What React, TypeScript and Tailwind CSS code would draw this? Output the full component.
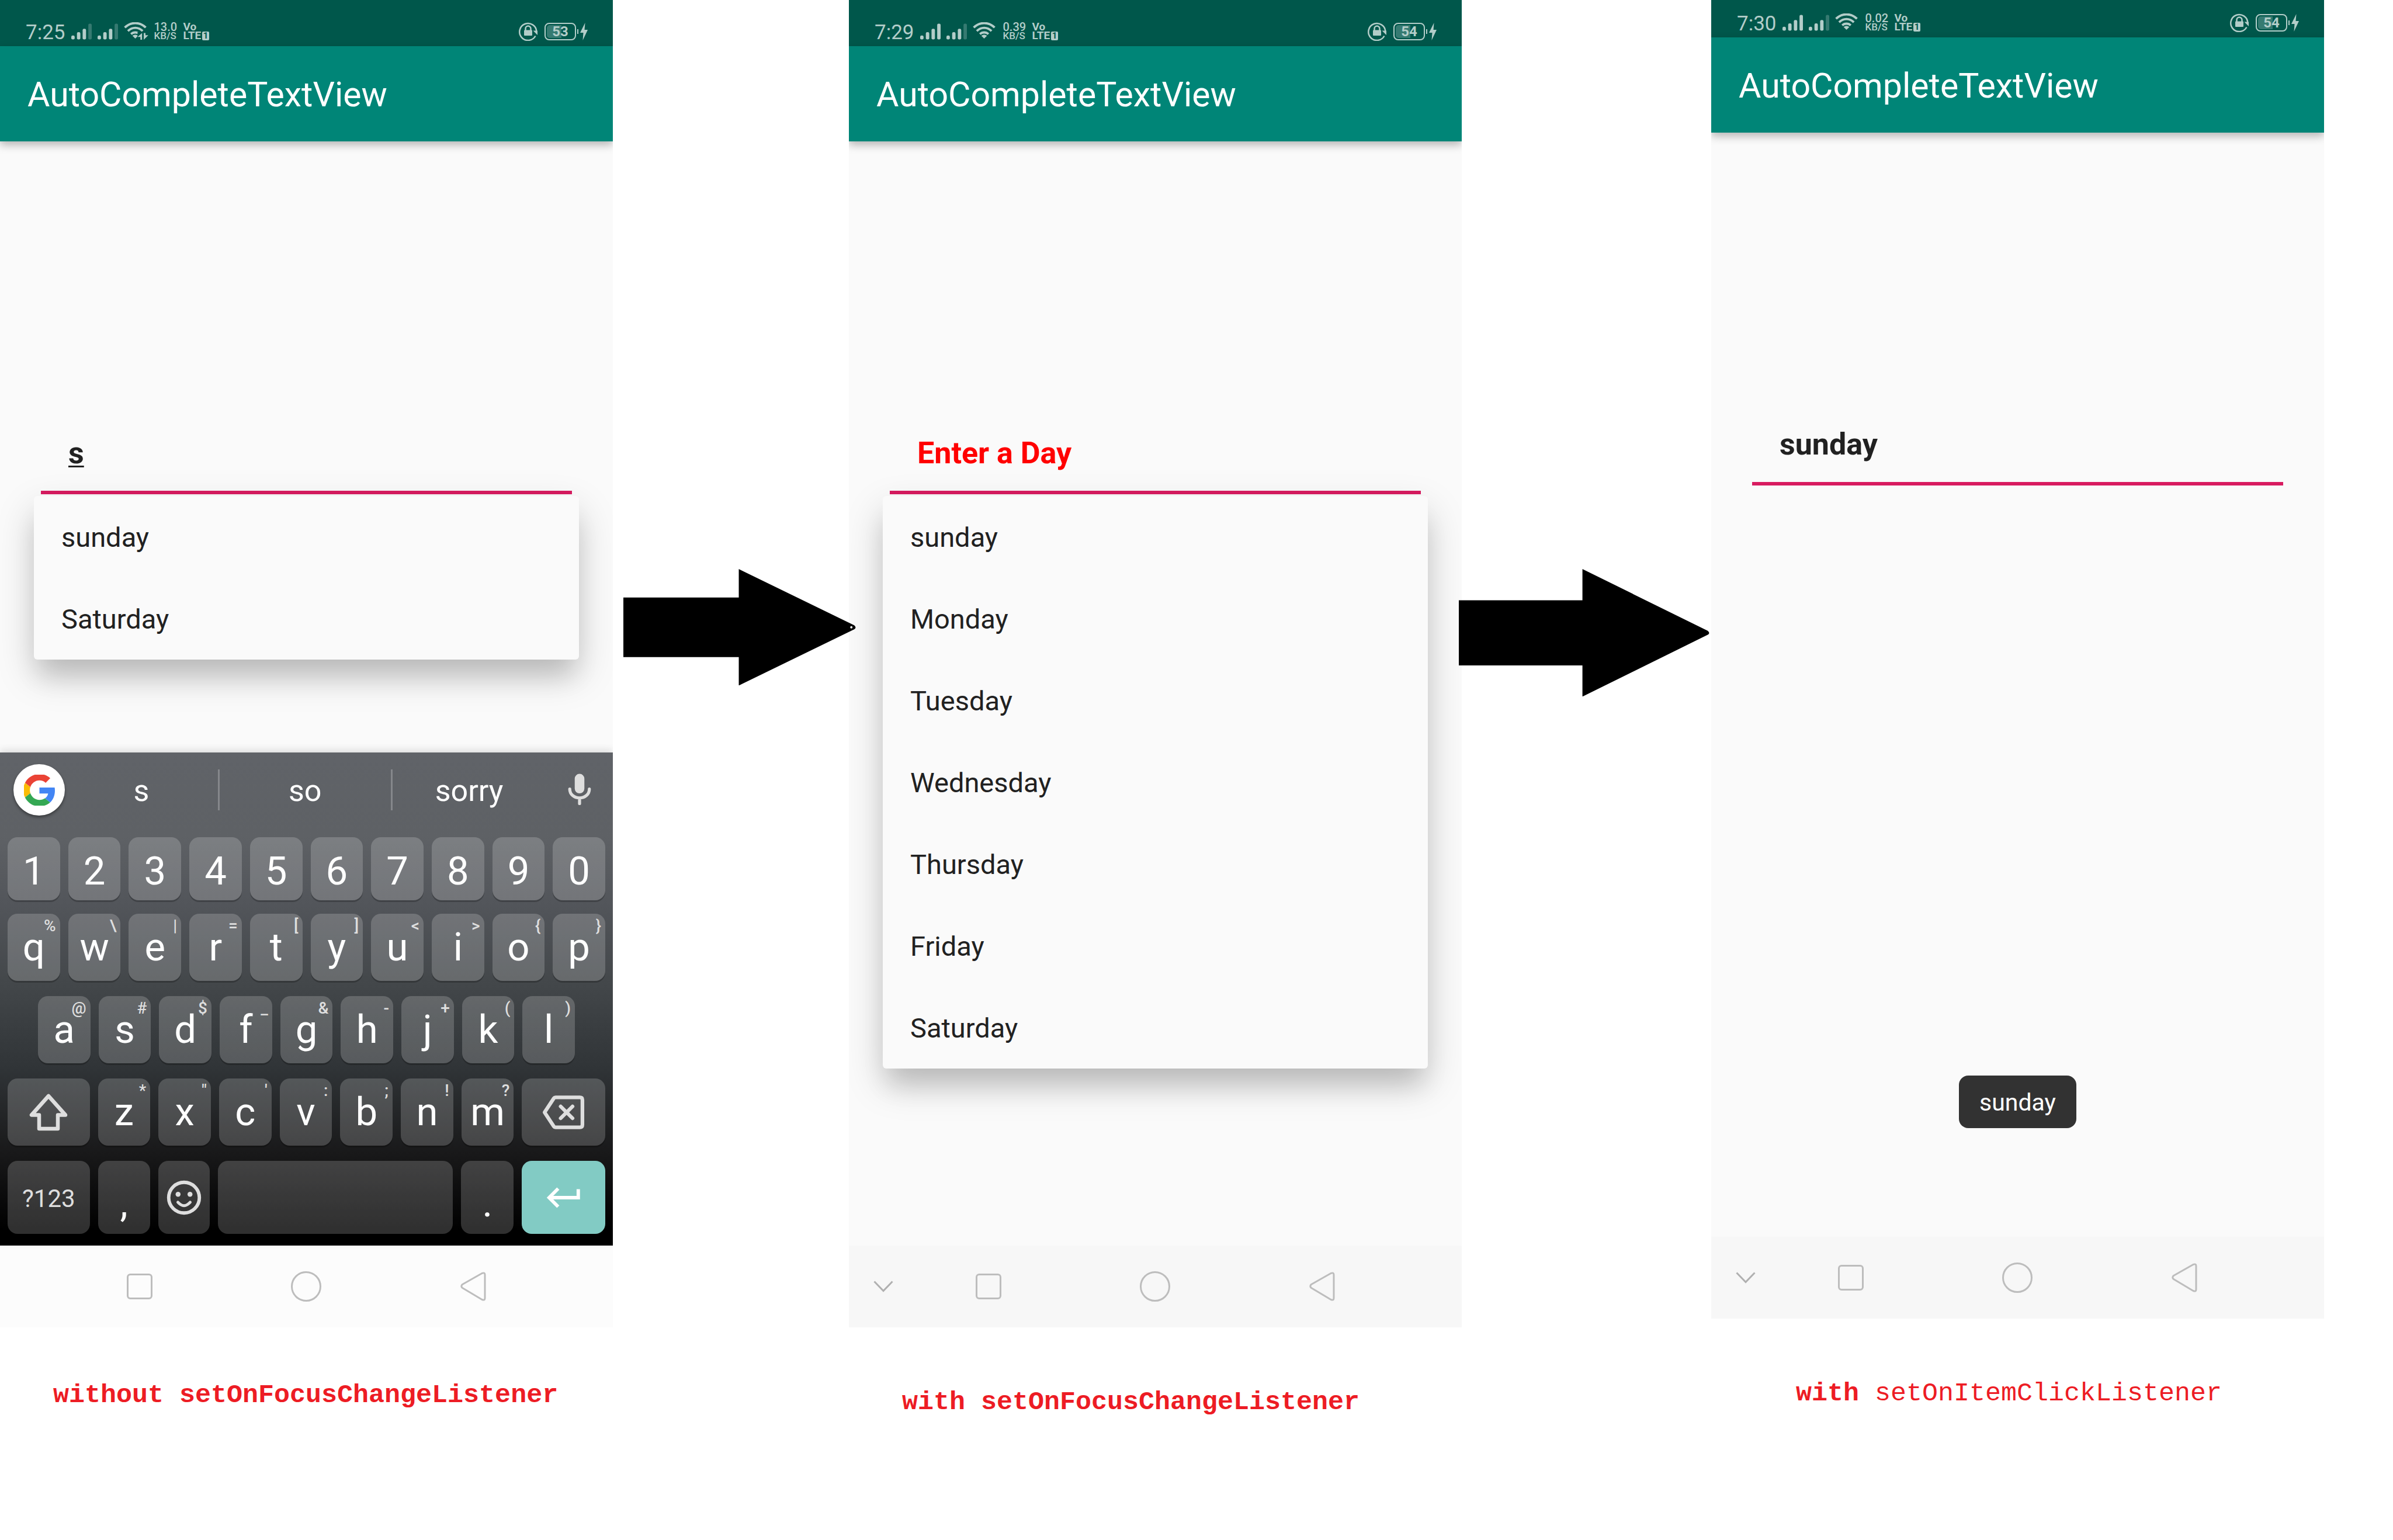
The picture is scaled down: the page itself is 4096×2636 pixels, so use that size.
import React from "react";

type Status = {
  time: string;
  firstSim: number;
  rate: string;
  battery: string;
  syncing?: boolean;
};

/* ---------- status bar ---------- */

function Signal({ level }: { level: number }) {
  const tops = [21, 15, 9, 0];
  return (
    <svg className="h-[28px] w-[35px] shrink-0" viewBox="0 0 36 28" fill="currentColor" aria-hidden="true">
      {tops.map((top, i) => (
        <rect key={i} x={i * 10} y={top} width="6" height={28 - top} rx="2.500" opacity={i < level ? 1 : 0.3} />
      ))}
    </svg>
  );
}

function Wifi({ syncing }: { syncing?: boolean }) {
  return (
    <svg className="h-[31px] w-[42px] shrink-0" viewBox="0 0 43 32" fill="none" stroke="currentColor" aria-hidden="true">
      <path d="M1.500 9.500C12 -1 28 -1 38.500 9.500" strokeWidth="4" />
      <path d="M7 15.500C14.500 8 25.500 8 33 15.500" strokeWidth="4" />
      <path d="M12.500 21C16.800 17 23.200 17 27.500 21" strokeWidth="4" />
      <path d="M15 24C18 21.500 22 21.500 25 24L20 29z" fill="currentColor" stroke="none" />
      {syncing && (
        <g stroke="none">
          <path d="M24 17h19v15H24z" fill="#00574b" />
          <path d="M32 19v12h-3v-5h-5zM35 31V19h3v4h5z" fill="currentColor" />
        </g>
      )}
    </svg>
  );
}

function StatusBar({ status }: { status: Status }) {
  return (
    <div className="flex h-[79px] items-center justify-between bg-[#00574b] pt-[28px] pr-[43px] pl-[44px] text-[#b3cdc9]">
      <div className="flex items-center gap-[10px]">
        <span className="pt-1 text-[35px] leading-none">{status.time}</span>
        <Signal level={status.firstSim} />
        <Signal level={3} />
        <Wifi syncing={status.syncing} />
        <div className="flex w-[40px] flex-col font-medium">
          <span className="text-[20px] leading-[15px]">{status.rate}</span>
          <span className="text-[17px] leading-[15px]">KB/S</span>
        </div>
        <div className="flex flex-col font-bold">
          <span className="text-[19px] leading-[15px]">Vo</span>
          <span className="flex items-center gap-[2px] text-[19px] leading-[16px]">
            LTE
            <span className="flex h-[15px] w-[12px] items-center justify-center rounded-[2px] bg-[#b3cdc9] text-[15px] leading-none text-[#00574b]">
              1
            </span>
          </span>
        </div>
      </div>
      <div className="flex items-center">
        <svg className="mr-[12px] h-[32px] w-[32px]" viewBox="0 0 32 32" fill="none" stroke="currentColor" aria-hidden="true">
          <path d="M28.500 23.500A14.500 14.500 0 1 1 30.300 16" strokeWidth="2.500" />
          <path d="M24.500 14.500H32V22z" fill="currentColor" stroke="none" />
          <path d="M11.500 14v-3a4.500 4.500 0 0 1 9 0v3" strokeWidth="2.500" />
          <rect x="9" y="13.500" width="14" height="9.500" rx="1" fill="currentColor" stroke="none" />
        </svg>
        <div className="relative flex h-[30px] w-[54px] items-center justify-center rounded-[8px] border-2 border-[#b3cdc9]">
          <span className="absolute inset-y-[2px] left-[2px] w-[25px] rounded-l-[5px] bg-[#367b72]" />
          <span className="relative text-[24px] leading-none font-bold">{status.battery}</span>
        </div>
        <span className="ml-[2px] h-[8px] w-[2px] bg-[#b3cdc9]" />
        <svg className="ml-[3px] h-[30px] w-[13px]" viewBox="0 0 13 30" fill="currentColor" aria-hidden="true">
          <path d="M8.500 0L0 17h5.500L4.500 30 13 12H7.500z" />
        </svg>
      </div>
    </div>
  );
}

/* ---------- navigation bar ---------- */

function NavBar({ chevron, tone }: { chevron: boolean; tone: string }) {
  return (
    <nav className={`grid h-[140px] grid-cols-[96fr_285fr_286fr_285fr_97fr] items-center ${tone}`}>
      <div className="flex justify-end pr-[20px]">
        {chevron && (
          <button aria-label="Hide" className="text-[#b0b0b0]">
            <svg className="h-[20px] w-[34px]" viewBox="0 0 34 20" fill="none" stroke="currentColor" strokeWidth="3">
              <path d="M1.500 1.500L17 17.500 32.500 1.500" />
            </svg>
          </button>
        )}
      </div>
      <button aria-label="Recent apps" className="flex justify-center text-[#bdbdbd]">
        <svg className="h-[44px] w-[44px]" viewBox="0 0 44 44" fill="none" stroke="currentColor" strokeWidth="3">
          <rect x="1.500" y="1.500" width="41" height="41" rx="4.500" />
        </svg>
      </button>
      <button aria-label="Home" className="flex justify-center text-[#bdbdbd]">
        <svg className="h-[52px] w-[52px]" viewBox="0 0 52 52" fill="none" stroke="currentColor" strokeWidth="3">
          <circle cx="26" cy="26" r="24.500" />
        </svg>
      </button>
      <button aria-label="Back" className="flex justify-center text-[#bdbdbd]">
        <svg className="h-[50px] w-[44px]" viewBox="0 0 44 50" fill="none" stroke="currentColor" strokeWidth="3" strokeLinejoin="round">
          <path d="M37 2.500L3.500 21.500Q0 24.500 3.500 27.500L37 47.500Q42 49.500 42 45V5Q42 .5 37 2.500z" />
        </svg>
      </button>
    </nav>
  );
}

/* ---------- text field with its suggestions ---------- */

function DayField({ value, hint, options, composing }: {
  value?: string;
  hint?: string;
  options?: string[];
  composing?: boolean;
}) {
  return (
    <div className="relative mx-[70px] mt-[468px]">
      <input
        aria-label="Day"
        type="text"
        defaultValue={value}
        placeholder={hint}
        autoComplete="off"
        className={`block h-[136px] w-full border-b-[6px] border-[#d81b60] bg-transparent pl-[47px] text-[52px] leading-[60px] font-bold text-[#212121] outline-none placeholder:text-[#ff0000] placeholder:opacity-100 ${
          composing ? "underline decoration-[3px] underline-offset-[4px]" : ""
        }`}
      />
      {options && (
        <ul className="absolute inset-x-[-12px] top-full mt-[3px] rounded-[6px] bg-[#fafafa] shadow-[0_26px_66px_rgba(0,0,0,0.18),0_36px_40px_-8px_rgba(0,0,0,0.12)]">
          {options.map((day) => (
            <li key={day}>
              <button className="flex h-[140px] w-full items-center px-[47px] pt-[2px] text-left text-[47px] text-[#212121]">
                {day}
              </button>
            </li>
          ))}
        </ul>
      )}
    </div>
  );
}

/* ---------- keyboard ---------- */

function Key({ label, hint, className = "", tone = "bg-white/19", children, aria }: {
  label?: string;
  hint?: string;
  className?: string;
  tone?: string;
  children?: React.ReactNode;
  aria?: string;
}) {
  return (
    <button
      aria-label={aria}
      className={`relative flex min-w-0 flex-1 items-center justify-center rounded-[17px] text-[67px] leading-none text-white shadow-[0_3px_0_rgba(0,0,0,0.22)] ${tone} ${className}`}
    >
      {label}
      {children}
      {hint && (
        <span className="absolute top-[7px] right-[7px] text-[28px] leading-none font-medium text-[#dedede]">{hint}</span>
      )}
    </button>
  );
}

const rowOne: [string, string][] = [
  ["q", "%"], ["w", "\\"], ["e", "|"], ["r", "="], ["t", "["],
  ["y", "]"], ["u", "<"], ["i", ">"], ["o", "{"], ["p", "}"],
];
const rowTwo: [string, string][] = [
  ["a", "@"], ["s", "#"], ["d", "$"], ["f", "_"], ["g", "&"], ["h", "-"], ["j", "+"], ["k", "("], ["l", ")"],
];
const rowThree: [string, string][] = [
  ["z", "*"], ["x", "\""], ["c", "'"], ["v", ":"], ["b", ";"], ["n", "!"], ["m", "?"],
];

function Keyboard() {
  return (
    <div className="relative h-[844px] bg-[linear-gradient(to_bottom,#606368_0%,#5e6165_17%,#52555a_31%,#43474a_47%,#303437_64%,#19191a_81%,#000000_97%)] shadow-[0_-4px_12px_rgba(0,0,0,0.12)]">
      <div className="grid h-[145px] grid-cols-[107fr_266fr_297fr_264fr_115fr] items-center pb-[17px] text-[52px] text-white">
        <button aria-label="Google" className="ml-[23px] flex h-[88px] w-[88px] items-center justify-center rounded-full bg-white shadow-[0_3px_5px_rgba(0,0,0,0.4)]">
          <svg className="h-[53px] w-[53px]" viewBox="1 1 46 46" aria-hidden="true">
            <path fill="#EA4335" d="M24 9.500c3.540 0 6.710 1.220 9.210 3.600l6.850-6.850C35.900 2.380 30.470 0 24 0 14.620 0 6.510 5.380 2.560 13.220l7.980 6.190C12.430 13.720 17.740 9.500 24 9.500z" />
            <path fill="#4285F4" d="M46.980 24.550c0-1.570-.15-3.090-.38-4.550H24v9.020h12.940c-.58 2.960-2.260 5.480-4.780 7.180l7.730 6c4.510-4.180 7.090-10.360 7.090-17.650z" />
            <path fill="#FBBC05" d="M10.530 28.590c-.48-1.450-.76-2.990-.76-4.590s.27-3.140.76-4.590l-7.980-6.190C.92 16.460 0 20.120 0 24c0 3.880.92 7.540 2.560 10.780l7.970-6.190z" />
            <path fill="#34A853" d="M24 48c6.480 0 11.930-2.130 15.890-5.810l-7.730-6c-2.150 1.450-4.920 2.300-8.160 2.300-6.260 0-11.570-4.220-13.470-9.910l-7.980 6.190C6.510 42.620 14.620 48 24 48z" />
          </svg>
        </button>
        <button className="flex h-[70px] items-center justify-center border-r-[3px] border-[#85878b] pt-1">s</button>
        <button className="flex h-[70px] items-center justify-center border-r-[3px] border-[#85878b] pt-1">so</button>
        <button className="flex h-[70px] items-center justify-center pt-1">sorry</button>
        <button aria-label="Voice input" className="flex justify-center text-[#dedede]">
          <svg className="h-[66px] w-[66px]" viewBox="0 0 24 24" aria-hidden="true">
            <rect x="9" y="2" width="6" height="12.200" rx="3" fill="currentColor" />
            <path d="M5.900 11.500c0 3.200 2.700 5.500 6.100 5.500s6.100-2.300 6.100-5.500M12 17v3.500" fill="none" stroke="currentColor" strokeWidth="1.900" strokeLinecap="round" />
          </svg>
        </button>
      </div>

      <div className="mb-[23px] flex h-[108px] gap-[14px] px-[13px]">
        {"1234567890".split("").map((d) => (
          <Key key={d} label={d} className="pt-2" />
        ))}
      </div>

      <div className="flex flex-col gap-[26px]">
        <div className="flex h-[115px] gap-[14px] px-[13px]">
          {rowOne.map(([k, h]) => <Key key={k} label={k} hint={h} />)}
        </div>
        <div className="flex h-[115px] gap-[14px] px-[65px]">
          {rowTwo.map(([k, h]) => <Key key={k} label={k} hint={h} />)}
        </div>
        <div className="grid h-[115px] grid-cols-[141fr_repeat(7,90fr)_143fr] gap-[14px] px-[13px]">
          <Key aria="Shift">
            <svg className="h-[66px] w-[66px]" viewBox="0 0 66 66" fill="none" stroke="#dedede" strokeWidth="6.500" strokeLinejoin="round" aria-hidden="true">
              <path d="M33 5L4 37.500h13V61h32V37.500h13z" />
            </svg>
          </Key>
          {rowThree.map(([k, h]) => <Key key={k} label={k} hint={h} />)}
          <Key aria="Delete">
            <svg className="h-[58px] w-[73px]" viewBox="0 0 74 60" fill="none" stroke="#dedede" strokeWidth="6.500" strokeLinejoin="round" strokeLinecap="round" aria-hidden="true">
              <path d="M23 3.500H66q4.500 0 4.500 4.500V52q0 4.500-4.500 4.500H23Q21 56.500 20 55L3.500 30 20 5Q21 3.500 23 3.500z" />
              <path d="M32 19.500l21 21M53 19.500l-21 21" />
            </svg>
          </Key>
        </div>
        <div className="grid h-[125px] grid-cols-[141fr_89fr_89fr_403fr_90fr_143fr] gap-[14px] px-[13px]">
          <Key>
            <span className="pt-1 text-[42px] text-[#dedede]">?123</span>
          </Key>
          <Key label="," className="pt-5" />
          <Key aria="Emoji">
            <svg className="h-[70px] w-[70px]" viewBox="0 0 24 24" fill="none" stroke="#dedede" aria-hidden="true">
              <circle cx="12" cy="12" r="9" strokeWidth="2" />
              <circle cx="8.500" cy="10" r="1.450" fill="#dedede" stroke="none" />
              <circle cx="15.500" cy="10" r="1.450" fill="#dedede" stroke="none" />
              <path d="M8.400 14.700Q12 18.700 15.600 14.700" strokeWidth="1.700" strokeLinecap="round" />
            </svg>
          </Key>
          <Key aria="Space" />
          <Key label="." className="pt-5" />
          <Key aria="Enter" tone="bg-[#82cbc4]">
            <svg className="h-[70px] w-[70px]" viewBox="0 0 24 24" fill="white" aria-hidden="true">
              <path d="M19.500 7v4H5.830l3.580-3.590L8 6l-6 6 6 6 1.410-1.410L5.830 13H21.500V7z" />
            </svg>
          </Key>
        </div>
      </div>
    </div>
  );
}

/* ---------- phone ---------- */

function Phone({ status, children, footer, nav, chevron }: {
  status: Status;
  children: React.ReactNode;
  footer?: React.ReactNode;
  nav: string;
  chevron: boolean;
}) {
  return (
    <section className="flex min-h-[2272px] flex-col overflow-hidden bg-[#fafafa] font-[Roboto,sans-serif]">
      <StatusBar status={status} />
      <header className="flex h-[163px] items-center bg-[#008577] pt-1 pl-[47px] text-white shadow-[0_6px_14px_rgba(0,0,0,0.28)]">
        <h1 className="text-[59px]">AutoCompleteTextView</h1>
      </header>
      <div className="flex-1">{children}</div>
      {footer}
      <NavBar chevron={chevron} tone={nav} />
    </section>
  );
}

const captionClass =
  "pl-[91px] font-['Liberation_Mono','Courier_New',monospace] text-[45px] leading-[52px] font-bold whitespace-nowrap text-[#ed1c24]";

export default function App() {
  return (
    <main className="grid min-h-screen grid-cols-[1049fr_404fr_1049fr_427fr_1049fr_118fr] items-start overflow-hidden bg-white">
      <figure className="min-w-0">
        <Phone
          status={{ time: "7:25", firstSim: 3, rate: "13.0", battery: "53", syncing: true }}
          nav="bg-[#fcfcfc]"
          chevron={false}
          footer={<Keyboard />}
        >
          <DayField value="s" composing options={["sunday", "Saturday"]} />
        </Phone>
        <figcaption className={`mt-[91px] ${captionClass}`}>without setOnFocusChangeListener</figcaption>
      </figure>

      <div className="relative z-10 mt-[974px] -mr-[12px] ml-[18px]">
        <svg className="block h-auto w-full" viewBox="0 0 409 205" aria-hidden="true">
          <path d="M0 50H203V0L406 99Q411 103 406 106L203 205V155H0z" />
          <circle cx="401" cy="102.500" r="2" fill="white" />
        </svg>
      </div>

      <figure className="min-w-0">
        <Phone
          status={{ time: "7:29", firstSim: 4, rate: "0.39", battery: "54" }}
          nav="bg-[#f7f7f7]"
          chevron
        >
          <DayField
            hint="Enter a Day"
            options={["sunday", "Monday", "Tuesday", "Wednesday", "Thursday", "Friday", "Saturday"]}
          />
        </Phone>
        <figcaption className={`mt-[103px] ${captionClass}`}>with setOnFocusChangeListener</figcaption>
      </figure>

      <div className="relative z-10 mt-[974px] mr-[3px] -ml-[5px]">
        <svg className="block h-auto w-full" viewBox="0 0 442 225" aria-hidden="true">
          <path d="M0 55H218V0L439 109Q444 113 439 116L218 225V170H0z" />
        </svg>
      </div>

      <figure className="-mt-[15px] min-w-0">
        <Phone
          status={{ time: "7:30", firstSim: 4, rate: "0.02", battery: "54" }}
          nav="bg-[#f7f7f7]"
          chevron
          footer={
            <div role="status" className="mb-[186px] flex h-[90px] items-center self-center rounded-[16px] bg-[#323232] px-[35px] pt-1 text-[41px] text-white">
              sunday
            </div>
          }
        >
          <DayField value="sunday" />
        </Phone>
        <figcaption className={`mt-[103px] ${captionClass}`}>
          <span className="ml-[54px]">with </span>
          <span className="font-normal">setOnItemClickListener</span>
        </figcaption>
      </figure>
    </main>
  );
}
